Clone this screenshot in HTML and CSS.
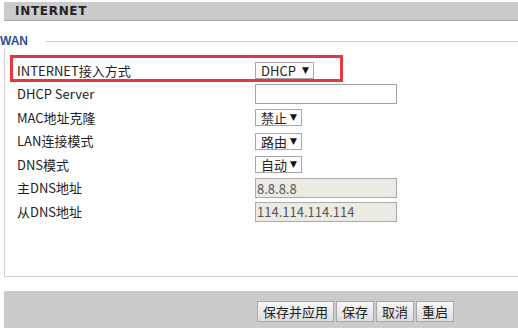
FILE: index.html
```html
<!DOCTYPE html>
<html lang="zh-CN">
<head>
    <meta charset="UTF-8">
    <title>INTERNET</title>
    <link rel="stylesheet" href="styles.css">
</head>
<body>
<div class="page">
    <div class="title">INTERNET</div>
    <div class="legend"><span class="legend-text">WAN</span><span class="legend-line"></span></div>
    <div class="group">
        <div class="mark"></div>
        <div class="form">
            <label>INTERNET接入方式</label>
            <span class="sel sel-wide"><select><option>DHCP</option><option>PPPoE</option><option>Static</option></select></span>

            <label>DHCP Server</label>
            <input type="text" class="text" value="">

            <label>MAC地址克隆</label>
            <span class="sel"><select><option>禁止</option><option>启用</option></select></span>

            <label>LAN连接模式</label>
            <span class="sel"><select><option>路由</option><option>桥接</option></select></span>

            <label>DNS模式</label>
            <span class="sel"><select><option>自动</option><option>手动</option></select></span>

            <label>主DNS地址</label>
            <input type="text" class="text" value="8.8.8.8" disabled>

            <label>从DNS地址</label>
            <input type="text" class="text" value="114.114.114.114" disabled>
        </div>
    </div>
    <div class="footer">
        <button class="btn">保存并应用</button>
        <button class="btn">保存</button>
        <button class="btn">取消</button>
        <button class="btn">重启</button>
    </div>
</div>
</body>
</html>
```

FILE: styles.css
```css
body {
    margin: 0;
    overflow: hidden;
    background: #fff;
    font-family: "Noto Sans CJK SC", "Liberation Sans", sans-serif;
    font-size: 13px;
    color: #222;
}
.page {
    width: 514px;
    margin-left: 4px;
    padding-top: 2px;
}
.title {
    height: 18px;
    line-height: 18px;
    background: #cbcbcb;
    border-bottom: 1px solid #a6a6a6;
    padding-left: 11px;
    font-family: "DejaVu Sans", sans-serif;
    font-weight: bold;
    font-size: 12px;
    letter-spacing: 0.7px;
    color: #222;
}
.legend {
    display: flex;
    align-items: center;
    height: 14px;
    margin: 13px 0 0 -4px;
}
.legend-text {
    font-family: "Liberation Sans", sans-serif;
    font-weight: bold;
    font-size: 12px;
    line-height: 14px;
    color: #2f4f95;
}
.legend-line {
    flex: 1;
    height: 1px;
    background: #cfcfcf;
    margin-left: 18px;
}
.group {
    position: relative;
    border-left: 1px solid #cfcfcf;
    border-bottom: 1px solid #cfcfcf;
    padding: 11px 0 52px 12px;
}
.mark {
    position: absolute;
    left: 5px;
    top: 7px;
    width: 333px;
    height: 27px;
    box-sizing: border-box;
    border: 3px solid #e5383e;
    pointer-events: none;
}
.form {
    display: grid;
    grid-template-columns: 238px auto;
    grid-auto-rows: 23.5px;
    align-items: center;
    justify-items: start;
}
.form label {
    line-height: 16px;
}
.sel {
    position: relative;
    display: inline-block;
    height: 17px;
}
.sel select {
    appearance: none;
    -webkit-appearance: none;
    width: 47px;
    height: 17px;
    box-sizing: border-box;
    border: 1px solid #a6a6a6;
    border-radius: 0;
    background: #fff;
    padding: 0 0 0 5px;
    font-family: inherit;
    font-size: 13px;
    line-height: 15px;
    color: #222;
    display: block;
}
.sel-wide select {
    width: 59px;
}
.sel::after {
    content: "\25BC";
    position: absolute;
    right: 5px;
    top: 3px;
    font-family: "DejaVu Sans", sans-serif;
    font-size: 9px;
    line-height: 10px;
    color: #111;
    pointer-events: none;
}
.text {
    width: 142px;
    height: 20px;
    box-sizing: border-box;
    border: 1px solid #a5a5a5;
    border-radius: 0;
    padding: 0 1px;
    margin: 0;
    font-family: inherit;
    font-size: 13px;
    color: #222;
    background: #fff;
}
.text:disabled {
    background: #ebebe4;
    border-color: #a9a9a9;
    color: #555;
}
.footer {
    display: flex;
    align-items: flex-start;
    gap: 2px;
    height: 28px;
    margin-top: 14px;
    padding: 10px 0 0 253px;
    background: #cbcbcb;
}
.btn {
    height: 21px;
    padding: 0 5px;
    border: 1px solid #a8a8a8;
    border-radius: 0;
    background: linear-gradient(#f6f6f6, #dedede);
    font-family: inherit;
    font-size: 13px;
    line-height: 19px;
    color: #222;
}
```
